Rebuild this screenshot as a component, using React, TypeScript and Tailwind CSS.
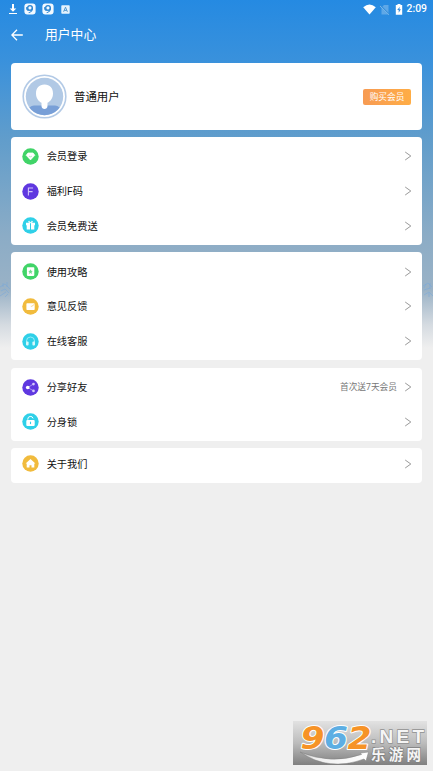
import React from "react";

type IconName = "gem" | "f" | "gift" | "guide" | "mail" | "headset" | "share" | "lock" | "home";

const colors: Record<IconName, string> = {
  gem: "#41d468",
  f: "#5f38e0",
  gift: "#2fd0e8",
  guide: "#41d468",
  mail: "#f1bb3d",
  headset: "#2fd0e8",
  share: "#5f38e0",
  lock: "#2fd0e8",
  home: "#f1bb3d",
};

function Glyph({ name }: { name: IconName }) {
  switch (name) {
    case "gem":
      return (
        <>
          <path d="M6 5h5l1.8 2.3-4.3 4.6-4.3-4.6z" fill="#fff" stroke="#fff" strokeWidth=".8" strokeLinejoin="round" />
          <path d="M7.1 8.2q1.4 1.2 2.8 0" fill="none" stroke="#8ce5a3" strokeWidth=".7" />
        </>
      );
    case "f":
      return <path d="M6.4 12.5V5h4.7M6.4 8.6h4.2" fill="none" stroke="#d0c3fb" strokeWidth="1.1" />;
    case "gift":
      return (
        <>
          <path d="M4 5.8h4v2.4H4zM9 5.8h4v2.4H9zM4.7 8.2H8v4.2H4.7zM9 8.2h3.3v4.2H9z" fill="#fff" />
          <path d="M8.5 5.8Q6 5.4 6.6 4.4T8.5 5.8Q10 3.3 10.5 4.4T8.5 5.8" fill="none" stroke="#fff" strokeWidth=".8" />
        </>
      );
    case "guide":
      return (
        <>
          <rect x="4.9" y="4.2" width="7.4" height="8.7" rx=".8" fill="#fff" />
          <path d="M8.5 6.2l.7 1.6 1.6.2-1.2 1.1.4 1.8-1.5-.9-1.5.9.4-1.8L6.2 8l1.6-.2z" fill="#72de8d" />
        </>
      );
    case "mail":
      return (
        <>
          <rect x="4.4" y="5.2" width="8.3" height="6.8" rx=".8" fill="#fff" />
          <path d="M8.8 8.2l1.1.1 2.6-2.1" fill="none" stroke="#f5cd6f" strokeWidth=".8" />
        </>
      );
    case "headset":
      return (
        <>
          <path d="M4.5 9.2V8a4 4 0 018 0v1.2" fill="none" stroke="#a4eef8" strokeWidth=".9" />
          <rect x="4" y="8.4" width="2.6" height="4" rx="1" fill="#d8f8fc" />
          <rect x="10.4" y="8.4" width="2.6" height="4" rx="1" fill="#d8f8fc" />
        </>
      );
    case "share":
      return (
        <>
          <path d="M11.5 5L5.8 8.5l5.7 3.4" fill="none" stroke="#bba9f7" strokeWidth=".8" />
          <circle cx="5.7" cy="8.5" r="1.8" fill="#fff" />
          <circle cx="11.5" cy="5.1" r="1.3" fill="#d5cafb" />
          <circle cx="11.5" cy="11.9" r="1.3" fill="#d5cafb" />
        </>
      );
    case "lock":
      return (
        <>
          <path d="M5.8 6.7V6a2.7 2.7 0 015.3-.6" fill="none" stroke="#fff" strokeWidth="1" />
          <rect x="4.3" y="7" width="8.4" height="6" rx="1.1" fill="#fff" />
          <path d="M8.5 8.7v2.4" stroke="#2fd0e8" strokeWidth="1.1" />
        </>
      );
    case "home":
      return <path d="M8.5 3.9l4.9 4.5h-1.1v4.2H9.5v-2.4h-2v2.4H4.7V8.4H3.6z" fill="#fff" />;
  }
}

function Row({ icon, label, note }: { icon: IconName; label: string; note?: string }) {
  return (
    <div className="flex h-[34.7px] shrink-0 items-center pr-[10.5px] pl-[11px]">
      <svg className="mr-[7.7px] size-[17px] shrink-0" viewBox="0 0 17 17">
        <circle cx="8.5" cy="8.5" r="8.2" fill={colors[icon]} />
        <Glyph name={icon} />
      </svg>
      <span className="flex-1 pt-[2px] text-[10.2px] leading-4 text-[#111]">{label}</span>
      {note && <span className="mr-[6.5px] text-[8.7px] leading-4 text-[#777]">{note}</span>}
      <svg className="h-[10px] w-[8px]" viewBox="0 0 8 10" fill="none" stroke="#999" strokeWidth="1">
        <path d="M1.2 1L6.8 5 1.2 9" />
      </svg>
    </div>
  );
}

function Card({ children, className }: { children: React.ReactNode; className: string }) {
  return <section className={`mx-[11px] rounded-[4px] bg-white ${className}`}>{children}</section>;
}

function BadgeNine() {
  return (
    <svg className="size-[12px]" viewBox="0 0 12 12">
      <rect x=".4" y=".4" width="11.2" height="11.2" rx="3" fill="#f2f9ff" />
      <circle cx="6" cy="4.9" r="2.3" fill="none" stroke="#2b85d2" strokeWidth="1.4" />
      <path d="M8.4 4.9Q8.6 8.7 4.7 9.7M2.8 4Q2.2 6.8 4.6 7.6" fill="none" stroke="#2b85d2" strokeWidth="1.1" />
    </svg>
  );
}

function Logo() {
  return (
    <svg className="h-[44px] w-[134px] overflow-visible" viewBox="0 0 134 44">
      <defs>
        <linearGradient id="plate" x1="0" y1="0" x2="0" y2="1">
          <stop stopColor="#e2e2e2" />
          <stop offset=".5" stopColor="#bcbcbc" />
          <stop offset="1" stopColor="#808080" />
        </linearGradient>
        <linearGradient id="swoosh" x1="0" y1="0" x2="1" y2="0">
          <stop stopColor="#aaa" />
          <stop offset=".2" stopColor="#eee" />
          <stop offset="1" stopColor="#fff" />
        </linearGradient>
      </defs>
      <rect width="134" height="44" fill="url(#plate)" />
      <g
        fontFamily="DejaVu Sans, sans-serif"
        fontWeight="bold"
        fontStyle="italic"
        fontSize="32.5"
        stroke="#fff"
        strokeWidth="2"
        paintOrder="stroke"
        strokeLinejoin="round"
      >
        <text x="7.5" y="28" textLength="24" lengthAdjust="spacingAndGlyphs" fill="#f69327">9</text>
        <text x="31" y="28" textLength="24" lengthAdjust="spacingAndGlyphs" fill="#5daee3">6</text>
        <text x="54.5" y="28" textLength="24" lengthAdjust="spacingAndGlyphs" fill="#f69327">2</text>
      </g>
      <text x="78" y="22" fontSize="19" fontWeight="bold" fontFamily="Liberation Sans, sans-serif" textLength="53" fill="#f5f5f5" stroke="#909090" strokeWidth="1.4" paintOrder="stroke">
        .NET
      </text>
      <path d="M7 31Q38 44 68.500 33.500L67.500 32 75.500 31 73 40 71 38Q36 51 7 31z" fill="url(#swoosh)" stroke="#808080" strokeWidth=".5" />
      <text x="78" y="38.5" fontSize="14.5" fontWeight="bold" textLength="50" fontFamily="Noto Sans CJK SC, sans-serif" fill="#f5f5f5" stroke="#808080" strokeWidth="1.3" paintOrder="stroke">
        乐游网
      </text>
    </svg>
  );
}

export default function App() {
  return (
    <main className="relative flex h-[771px] w-[433px] flex-col overflow-hidden bg-[#efefef] bg-[linear-gradient(180deg,#258ae2_0px,#3991dc_60px,#619dcb_140px,#8bacc6_235px,#9ab2c6_290px,#d5dbe1_325px,#efefef_348px)] font-['Roboto','Noto_Sans_CJK_SC',sans-serif]">
      <svg className="absolute top-[281px] left-0 h-[18px] w-[433px]" viewBox="0 0 433 18" fill="none" stroke="#78aadb" strokeOpacity=".55" strokeWidth="1">
        <path d="M0 6l5-3 5 5M1 10l4-2 4 4M0 15l6-4M7 1v5M3 2v4M8 13l-3 3M423 5l5-3 4 4M424 9l6-2M424 14l5-3 4 4M430 2v6M426 3l-2 4M429 12v4" />
      </svg>
      <div className="flex h-[18px] shrink-0 items-center pr-[6px] pl-[8px] text-white">
        <svg className="mr-[6px] h-[12px] w-[10px]" viewBox="0 0 10 12" fill="#fff">
          <path d="M4 1h2v4.500h2.300L5 8.700 1.700 5.500H4zM1 10h8v1.100H1z" />
        </svg>
        <BadgeNine />
        <span className="w-[6px]" />
        <BadgeNine />
        <svg className="ml-[7px] size-[9px]" viewBox="0 0 9 9">
          <rect x=".3" y=".3" width="8.400" height="8.400" rx=".8" fill="#e4f2fd" />
          <path d="M2.600 6.800L4.500 2.200l1.900 4.600M3.300 5.400h2.400" fill="none" stroke="#438eca" strokeWidth=".9" />
        </svg>
        <svg className="ml-auto h-[11px] w-[13px]" viewBox="0 0 13 11">
          <path d="M.2 3.200Q6.500-2.300 12.800 3.200L6.500 10.600z" fill="#fff" />
        </svg>
        <svg className="ml-[3px] size-[11px]" viewBox="0 0 11 11">
          <path d="M5 1h4.500v9.500h-7V3.500z" fill="#5fa8e7" />
          <path d="M1 1.200l9 9" stroke="#318cda" strokeWidth="1.500" />
          <path d="M1 2l9 8.800" stroke="#8cc1ee" strokeWidth=".8" />
        </svg>
        <svg className="ml-[5px] h-[11px] w-[8px]" viewBox="0 0 8 11">
          <path d="M2.500 0h3v1h1.700v9.800H.8V1h1.700z" fill="#fff" />
          <path d="M4.800 2.800L2.200 6h1.500v2.700l2.200-3.400H4.400z" fill="#348ddd" />
        </svg>
        <span className="ml-[4px] pt-[0.5px] text-[10.4px] leading-[14px] font-medium">2:09</span>
      </div>
      <header className="flex h-[33px] shrink-0 items-center pl-[11px] text-white">
        <svg className="h-[12px] w-[12px]" viewBox="0 0 12 12" fill="none" stroke="#fff" strokeWidth="1.300">
          <path d="M11.800 6H1M6 .8L.8 6 6 11.200" />
        </svg>
        <h1 className="ml-[22px] text-[12.8px] leading-5 font-normal">用户中心</h1>
      </header>
      <Card className="relative mt-[12px] flex h-[67px] shrink-0 items-center pr-[11px] pl-[11px]">
        <svg className="size-[45px]" viewBox="0 0 45 45">
          <defs>
            <clipPath id="portrait"><circle cx="22.500" cy="22.500" r="18.700" /></clipPath>
          </defs>
          <circle cx="22.500" cy="22.500" r="21.300" fill="#fff" stroke="#b3cae6" strokeWidth="1.600" />
          <circle cx="22.500" cy="22.500" r="18.700" fill="#b1c9e5" />
          <g clipPath="url(#portrait)">
            <path d="M5 43V38q2-6.500 7-6.500h21q5 0 7 6.500v5z" fill="#789fd7" />
            <path d="M22.500 10.500c-5.500 0-8.500 3.500-8.500 9 0 4.500 2.500 7.800 5.500 9.300v3.200c0 4 6 4 6 0v-3.200c3-1.500 5.500-4.800 5.500-9.300 0-5.500-3-9-8.500-9z" fill="#fff" />
          </g>
        </svg>
        <span className="ml-[7px] flex-1 pt-px text-[11.4px] leading-5 text-[#111]">普通用户</span>
        <button className="h-[16px] w-[48px] rounded-[2px] bg-linear-to-r from-[#f79b53] to-[#ffad45] text-[8.7px] leading-[16px] text-white">购买会员</button>
      </Card>
      <Card className="relative mt-[7px] h-[108px] shrink-0 pt-[2px]">
        <Row icon="gem" label="会员登录" />
        <Row icon="f" label="福利F码" />
        <Row icon="gift" label="会员免费送" />
      </Card>
      <Card className="relative mt-[7.4px] h-[108px] shrink-0 pt-[2px]">
        <Row icon="guide" label="使用攻略" />
        <Row icon="mail" label="意见反馈" />
        <Row icon="headset" label="在线客服" />
      </Card>
      <Card className="mt-[7.3px] h-[73px] shrink-0 pt-[2px]">
        <Row icon="share" label="分享好友" note="首次送7天会员" />
        <Row icon="lock" label="分身锁" />
      </Card>
      <Card className="mt-[7.3px] h-[35px] shrink-0">
        <div className="-mt-[1.5px]"><Row icon="home" label="关于我们" /></div>
      </Card>
      <footer className="mt-auto flex justify-end pr-[6px] pb-[6px]"><Logo /></footer>
    </main>
  );
}
